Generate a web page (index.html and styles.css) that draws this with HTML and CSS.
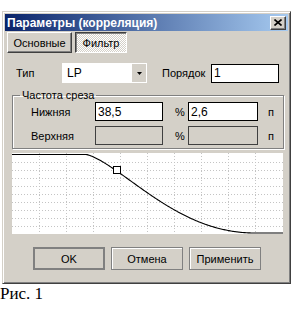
FILE: index.html
```html
<!DOCTYPE html>
<html lang="ru">
<head>
  <meta charset="UTF-8">
  <title>Параметры (корреляция)</title>
  <link rel="stylesheet" href="styles.css">
</head>
<body>

<!-- === Dialog window === -->
<div class="window">
  <div class="titlebar">
    <span class="title">Параметры (корреляция)</span>
    <span class="close">
      <svg width="8" height="7" viewBox="0 0 8 7"><path d="M0.5 0.5 L7.5 6.5 M7.5 0.5 L0.5 6.5" stroke="#000" stroke-width="1.6" fill="none"/></svg>
    </span>
  </div>

  <div class="tabs">
    <button class="tab">Основные</button>
    <button class="tab active">Фильтр</button>
  </div>

  <div class="page">
    <div class="type-row">
      <span class="lbl-type">Тип</span>
      <div class="combo">
        <span class="combo-value">LP</span>
        <span class="combo-btn">
          <svg width="5" height="3" viewBox="0 0 5 3"><polygon points="0,0 5,0 2.5,3" fill="#000"/></svg>
        </span>
      </div>
      <span class="lbl-order">Порядок</span>
      <input class="field order" value="1">
    </div>

    <fieldset class="group">
      <legend>Частота среза</legend>
      <div class="freq-grid">
        <span class="lbl">Нижняя</span>
        <input class="field" value="38,5">
        <span class="unit-pct">%</span>
        <input class="field" value="2,6">
        <span class="unit-p">п</span>

        <span class="lbl">Верхняя</span>
        <input class="field disabled" disabled>
        <span class="unit-pct">%</span>
        <input class="field disabled" disabled>
        <span class="unit-p">п</span>
      </div>
    </fieldset>

    <div class="chart">
      <svg width="271" height="81" viewBox="0 0 271 81" id="plot"></svg>
    </div>

    <div class="actions">
      <button class="btn default">OK</button>
      <button class="btn">Отмена</button>
      <button class="btn">Применить</button>
    </div>
  </div>
</div>

<p class="caption">Рис. 1</p>

<script>
  // ==== Filter response plot ====
  const plot = document.getElementById("plot");
  const ns = "http://www.w3.org/2000/svg";
  let grid = "";
  for (let k = 1; k < 10; k++) {
    grid += `M${27 * k + 0.5} 0 V81 `;
    grid += `M0 ${8 * k + 1.5} H271 `;
  }
  const g = document.createElementNS(ns, "path");
  g.setAttribute("d", grid);
  g.setAttribute("class", "grid");
  plot.appendChild(g);

  // smooth roll-off between x0 and x1
  const x0 = 74, x1 = 243;
  const points = [[0, 1.5]];
  for (let x = x0; x <= x1; x++) {
    const u = (x - x0) / (x1 - x0);
    const f = (1 - Math.cos(Math.PI * Math.pow(u, 0.7))) / 2;
    points.push([x, (1.5 + 78.5 * f).toFixed(2)]);
  }
  points.push([271, 80]);
  const curve = document.createElementNS(ns, "polyline");
  curve.setAttribute("points", points.map(p => p.join(",")).join(" "));
  curve.setAttribute("class", "curve");
  plot.appendChild(curve);

  const marker = document.createElementNS(ns, "rect");
  marker.setAttribute("x", "101.5");
  marker.setAttribute("y", "13.5");
  marker.setAttribute("width", "7");
  marker.setAttribute("height", "7");
  marker.setAttribute("class", "marker");
  plot.appendChild(marker);
</script>

</body>
</html>
```

FILE: styles.css
```css
/* ===== Global ===== */
* {
  margin: 0;
  padding: 0;
  box-sizing: border-box;
}
body {
  background: #fff;
  padding: 11px 0 0 2px;
  font-family: 'Liberation Sans', Arial, sans-serif;
  font-size: 11px;
  color: #000;
}
input, button {
  font-family: inherit;
  font-size: 11px;
  color: #000;
}

/* ===== Window frame ===== */
.window {
  width: 289px;
  background: #d4d0c8;
  border: 1px solid;
  border-color: #d4d0c8 #404040 #404040 #d4d0c8;
  box-shadow: inset 1px 1px 0 #fff, inset -1px -1px 0 #808080;
  padding: 2px 2px 13px 2px;
}
.titlebar {
  height: 17px;
  display: flex;
  align-items: center;
  justify-content: space-between;
  padding: 0 2px 0 2px;
  background: linear-gradient(to right, #0a246a, #a6caf0);
}
.title {
  color: #fff;
  font-weight: bold;
  font-size: 12px;
}
.close {
  width: 16px;
  height: 14px;
  display: flex;
  align-items: center;
  justify-content: center;
  background: #d4d0c8;
  border: 1px solid;
  border-color: #fff #404040 #404040 #fff;
  box-shadow: inset -1px -1px 0 #808080;
}

/* ===== Tabs ===== */
.tabs {
  display: flex;
  gap: 3px;
  margin: 1px 0 0 2px;
}
.tab {
  height: 21px;
  padding: 0 5px;
  background: #d4d0c8;
  border: 1px solid;
  border-color: #fff #404040 #404040 #fff;
  box-shadow: inset -1px -1px 0 #808080;
}
.tab:first-child {
  width: 65px;
}
.tab.active {
  width: 52px;
  border-color: #404040 #fff #fff #404040;
  box-shadow: inset 1px 1px 0 #808080;
  background: repeating-conic-gradient(#fff 0 25%, #d4d0c8 0 50%) 0 0 / 2px 2px;
}

/* ===== Page ===== */
.page {
  padding-top: 10px;
}
.type-row {
  display: flex;
  align-items: center;
  height: 20px;
  padding-left: 11px;
}
.lbl-type {
  width: 46px;
}
.combo {
  width: 85px;
  height: 20px;
  display: flex;
  align-items: center;
  background: #fff;
  padding: 1px;
}
.combo-value {
  flex: 1;
  padding-left: 4px;
  font-size: 12px;
}
.combo-btn {
  width: 14px;
  height: 18px;
  display: flex;
  align-items: center;
  justify-content: center;
  background: #d4d0c8;
}
.lbl-order {
  margin-left: 15px;
  width: 49px;
}
.field {
  height: 19px;
  border: 1px solid #000;
  background: #fff;
  padding: 0 2px;
  font-size: 12px;
  outline: none;
}
.field.order {
  width: 68px;
}
.field.disabled {
  background: #d4d0c8;
  border-color: #404040;
}

/* ===== Group box ===== */
.group {
  margin: 6px 0 0 7px;
  width: 272px;
  border: 1px solid #808080;
  box-shadow: inset 1px 1px 0 #fff, 1px 1px 0 #fff;
  padding: 1px 0 3px 0;
  min-width: 0;
}
.group legend {
  margin-left: 7px;
  padding: 0 2px;
  line-height: 12px;
}
.freq-grid {
  display: grid;
  grid-template-columns: 64px 68px 25px 70px auto;
  grid-auto-rows: 19px;
  row-gap: 5px;
  align-items: center;
  padding-left: 18px;
}
.freq-grid .field {
  width: 100%;
}
.unit-pct {
  padding-left: 12px;
}
.unit-p {
  padding-left: 10px;
}

/* ===== Chart ===== */
.chart {
  margin: 4px 0 0 7px;
  width: 271px;
  height: 81px;
  background: #fff;
}
.chart svg {
  display: block;
}
.grid {
  stroke: #c4c4c4;
  stroke-width: 1;
  stroke-dasharray: 1 2;
  fill: none;
}
.curve {
  stroke: #000;
  stroke-width: 1.1;
  fill: none;
}
.marker {
  fill: #fff;
  stroke: #000;
  stroke-width: 1;
}

/* ===== Buttons ===== */
.actions {
  display: flex;
  gap: 6px;
  margin: 13px 0 0 28px;
}
.btn {
  width: 72px;
  height: 23px;
  background: #d4d0c8;
  border: 1px solid #808080;
  box-shadow: inset 1px 1px 0 #fff;
}
.btn.default {
  border: 2px solid #808080;
  box-shadow: none;
}

/* ===== Caption ===== */
.caption {
  font-family: 'Liberation Serif', 'Times New Roman', serif;
  font-size: 17px;
  line-height: 16px;
  margin-left: -2px;
  margin-top: 2px;
}
```
